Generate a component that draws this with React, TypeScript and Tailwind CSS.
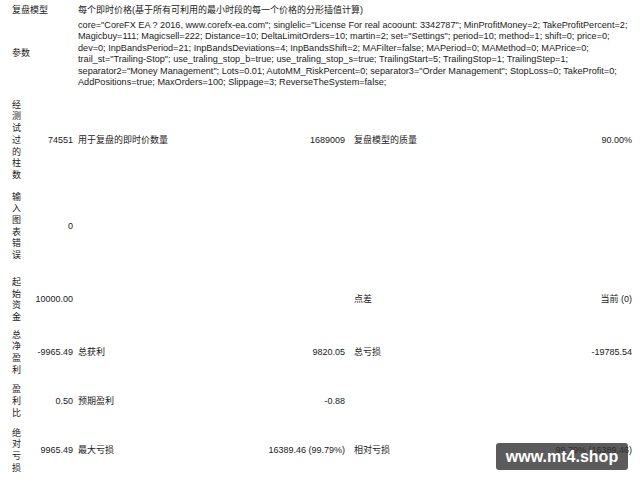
const grid =
  "grid grid-cols-[12px_49px_177px_95px_185px_102px] items-center ml-[12px]";

const params = [
  'core="CoreFX EA ? 2016, www.corefx-ea.com"; singlelic="License For real acoount: 3342787"; MinProfitMoney=2; TakeProfitPercent=2;',
  'Magicbuy=111; Magicsell=222; Distance=10; DeltaLimitOrders=10; martin=2; set="Settings"; period=10; method=1; shift=0; price=0;',
  "dev=0; InpBandsPeriod=21; InpBandsDeviations=4; InpBandsShift=2; MAFilter=false; MAPeriod=0; MAMethod=0; MAPrice=0;",
  'trail_st="Trailing-Stop"; use_traling_stop_b=true; use_traling_stop_s=true; TrailingStart=5; TrailingStop=1; TrailingStep=1;',
  'separator2="Money Management"; Lots=0.01; AutoMM_RiskPercent=0; separator3="Order Management"; StopLoss=0; TakeProfit=0;',
  "AddPositions=true; MaxOrders=100; Slippage=3; ReverseTheSystem=false;",
];

type Row = {
  label: string;
  value: string;
  mt: string;
  l2?: string;
  v2?: string;
  l3?: string;
  v3?: string;
};

const rows: Row[] = [
  { label: "经测试过的柱数", value: "74551", l2: "用于复盘的即时价数量", v2: "1689009", l3: "复盘模型的质量", v3: "90.00%", mt: "mt-[11px]" },
  { label: "输入图表错误", value: "0", mt: "mt-[10px]" },
  { label: "起始资金", value: "10000.00", l3: "点差", v3: "当前 (0)", mt: "mt-[15px]" },
  { label: "总净盈利", value: "-9965.49", l2: "总获利", v2: "9820.05", l3: "总亏损", v3: "-19785.54", mt: "mt-[6px]" },
  { label: "盈利比", value: "0.50", l2: "预期盈利", v2: "-0.88", mt: "mt-[8px]" },
  { label: "绝对亏损", value: "9965.49", l2: "最大亏损", v2: "16389.46 (99.79%)", l3: "相对亏损", v3: "99.79% (16389.46)", mt: "mt-[8px]" },
];

export default function App() {
  return (
    <div className="relative w-[640px] h-[480px] overflow-hidden bg-white text-[#1a1a1a] text-[9px] leading-[11.7px] font-['Liberation_Sans','Noto_Sans_CJK_SC',sans-serif]">
      <div className={`${grid} pt-[5px]`}>
        <div className="col-span-2">复盘模型</div>
        <div className="col-span-4 pl-[5px] whitespace-nowrap">
          每个即时价格(基于所有可利用的最小时段的每一个价格的分形插值计算)
        </div>
      </div>
      <div className={`${grid} mt-[3px]`}>
        <div className="col-span-2">参数</div>
        <div className="col-span-4 pl-[5px] whitespace-nowrap text-[9.13px] leading-[11.5px]">
          {params.map((p) => (
            <div key={p}>{p}</div>
          ))}
        </div>
      </div>

      {rows.map((r) => (
        <div key={r.label} className={`${grid} ${r.mt}`}>
          <div className="break-all">{r.label}</div>
          <div className="text-right whitespace-nowrap">{r.value}</div>
          <div className="pl-[5px] whitespace-nowrap">{r.l2}</div>
          <div className="text-right whitespace-nowrap">{r.v2}</div>
          <div className="pl-[9px] whitespace-nowrap">{r.l3}</div>
          <div className="text-right whitespace-nowrap">{r.v3}</div>
        </div>
      ))}

      {/* watermark */}
      <div className="absolute left-[496px] top-[443px] w-[132px] h-[27px] rounded-[3px] bg-[#323232]/80 flex items-center justify-center text-white font-bold text-[16px] font-['Liberation_Sans',sans-serif]">
        www.mt4.shop
      </div>
    </div>
  );
}
